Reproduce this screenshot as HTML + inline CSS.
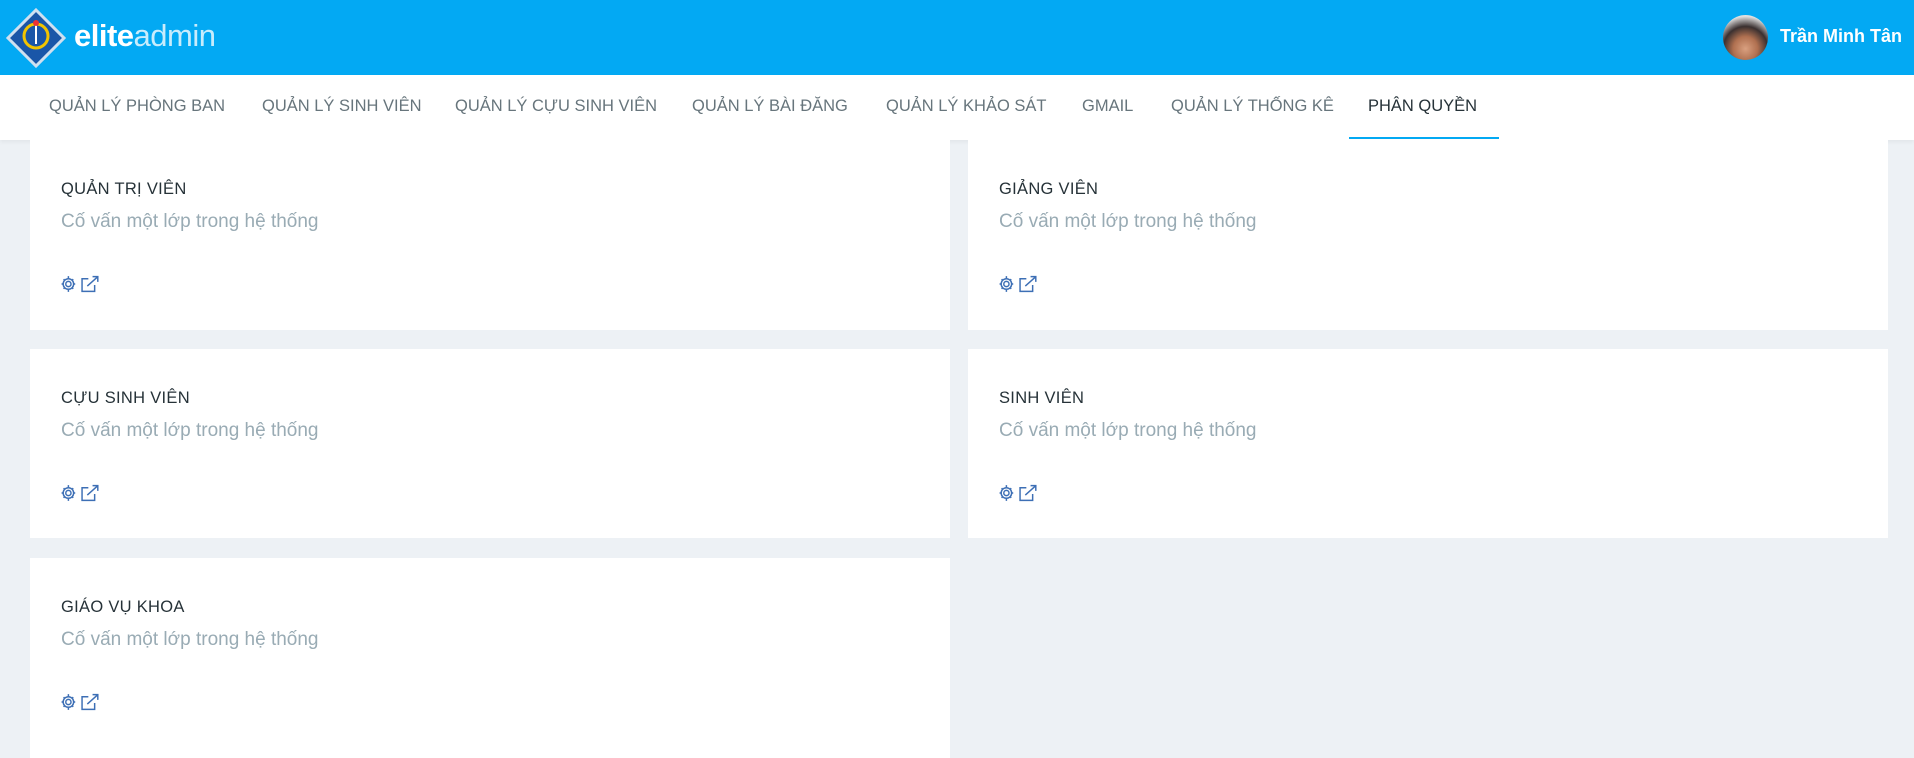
<!DOCTYPE html>
<html><head><meta charset="utf-8"><style>
*{margin:0;padding:0;box-sizing:border-box}
body{width:1914px;height:746px;overflow:hidden;background:#edf1f5;font-family:"Liberation Sans",sans-serif;position:relative}
.hdr{position:absolute;left:0;top:0;width:1914px;height:75px;background:#03a9f3}
.nav{position:absolute;left:0;top:75px;width:1914px;height:65px;background:#fff;box-shadow:0 2px 4px rgba(0,0,0,.05)}
.nav span{position:absolute;top:22px;font-size:16.5px;color:#67757c;white-space:nowrap}
.nav span.act{color:#263238}
.ul{position:absolute;left:1349px;top:62px;width:150px;height:2px;background:#03a9f3}
.card{position:absolute;background:#fff}
.card h4{position:absolute;left:31px;top:40px;font-size:16.5px;font-weight:normal;color:#263238;letter-spacing:.3px}
.card p{position:absolute;left:31px;top:71px;font-size:19px;color:#99abb4}
.card svg{position:absolute;left:30px;top:134px}
</style></head><body>
<div class="hdr">
<svg style="position:absolute;left:6px;top:8px" width="60" height="60" viewBox="0 0 60 60">
<polygon points="30,2 58,30 30,58 2,30" fill="#1a56a8" stroke="#cfe0f0" stroke-width="3"/>
<circle cx="30" cy="28" r="12" fill="none" stroke="#f2c400" stroke-width="3"/>
<line x1="30" y1="16" x2="30" y2="36" stroke="#fff" stroke-width="2"/>
<circle cx="30" cy="15" r="3" fill="#e33"/>
</svg>
<div style="position:absolute;left:74px;top:18px;font-size:31px;color:#fff;letter-spacing:-.5px"><b>elite</b><span style="color:#c8ecfc">admin</span></div>
<div style="position:absolute;left:1723px;top:15px;width:45px;height:45px;border-radius:50%;background:radial-gradient(circle at 50% 75%,#d9a080 0,#b07050 30%,#3a3030 55%,#e0e0e0 80%)"></div>
<div style="position:absolute;left:1780px;top:26px;font-size:18px;font-weight:bold;color:#fff">Trần Minh Tân</div>
</div>
<div class="nav">
<span style="left:49px">QUẢN LÝ PHÒNG BAN</span>
<span style="left:262px">QUẢN LÝ SINH VIÊN</span>
<span style="left:455px">QUẢN LÝ CỰU SINH VIÊN</span>
<span style="left:692px">QUẢN LÝ BÀI ĐĂNG</span>
<span style="left:886px">QUẢN LÝ KHẢO SÁT</span>
<span style="left:1082px">GMAIL</span>
<span style="left:1171px">QUẢN LÝ THỐNG KÊ</span>
<span class="act" style="left:1368px">PHÂN QUYỀN</span>
<div class="ul"></div>
</div>

<div class="card" style="left:30px;top:140px;width:920px;height:190px"><h4>QUẢN TRỊ VIÊN</h4><p>Cố vấn một lớp trong hệ thống</p>
<svg width="42" height="20" viewBox="0 0 40 18" fill="none" stroke="#3d6fb5" stroke-width="1.4"><circle cx="8" cy="9" r="2.5"/><path d="M8 1.5v2M8 14.5v2M1.5 9h2M12.5 9h2M3.4 4.4l1.4 1.4M11.2 12.2l1.4 1.4M3.4 13.6l1.4-1.4M11.2 5.8l1.4-1.4"/><circle cx="8" cy="9" r="5"/><path d="M27 4h-6v12h12v-6M26 11l10-9M31 2h5v5"/></svg></div>
<div class="card" style="left:968px;top:140px;width:920px;height:190px"><h4>GIẢNG VIÊN</h4><p>Cố vấn một lớp trong hệ thống</p>
<svg width="42" height="20" viewBox="0 0 40 18" fill="none" stroke="#3d6fb5" stroke-width="1.4"><circle cx="8" cy="9" r="2.5"/><path d="M8 1.5v2M8 14.5v2M1.5 9h2M12.5 9h2M3.4 4.4l1.4 1.4M11.2 12.2l1.4 1.4M3.4 13.6l1.4-1.4M11.2 5.8l1.4-1.4"/><circle cx="8" cy="9" r="5"/><path d="M27 4h-6v12h12v-6M26 11l10-9M31 2h5v5"/></svg></div>
<div class="card" style="left:30px;top:349px;width:920px;height:189px"><h4>CỰU SINH VIÊN</h4><p>Cố vấn một lớp trong hệ thống</p>
<svg width="42" height="20" viewBox="0 0 40 18" fill="none" stroke="#3d6fb5" stroke-width="1.4"><circle cx="8" cy="9" r="2.5"/><path d="M8 1.5v2M8 14.5v2M1.5 9h2M12.5 9h2M3.4 4.4l1.4 1.4M11.2 12.2l1.4 1.4M3.4 13.6l1.4-1.4M11.2 5.8l1.4-1.4"/><circle cx="8" cy="9" r="5"/><path d="M27 4h-6v12h12v-6M26 11l10-9M31 2h5v5"/></svg></div>
<div class="card" style="left:968px;top:349px;width:920px;height:189px"><h4>SINH VIÊN</h4><p>Cố vấn một lớp trong hệ thống</p>
<svg width="42" height="20" viewBox="0 0 40 18" fill="none" stroke="#3d6fb5" stroke-width="1.4"><circle cx="8" cy="9" r="2.5"/><path d="M8 1.5v2M8 14.5v2M1.5 9h2M12.5 9h2M3.4 4.4l1.4 1.4M11.2 12.2l1.4 1.4M3.4 13.6l1.4-1.4M11.2 5.8l1.4-1.4"/><circle cx="8" cy="9" r="5"/><path d="M27 4h-6v12h12v-6M26 11l10-9M31 2h5v5"/></svg></div>
<div class="card" style="left:30px;top:558px;width:920px;height:200px"><h4>GIÁO VỤ KHOA</h4><p>Cố vấn một lớp trong hệ thống</p>
<svg width="42" height="20" viewBox="0 0 40 18" fill="none" stroke="#3d6fb5" stroke-width="1.4"><circle cx="8" cy="9" r="2.5"/><path d="M8 1.5v2M8 14.5v2M1.5 9h2M12.5 9h2M3.4 4.4l1.4 1.4M11.2 12.2l1.4 1.4M3.4 13.6l1.4-1.4M11.2 5.8l1.4-1.4"/><circle cx="8" cy="9" r="5"/><path d="M27 4h-6v12h12v-6M26 11l10-9M31 2h5v5"/></svg></div>
</body></html>
